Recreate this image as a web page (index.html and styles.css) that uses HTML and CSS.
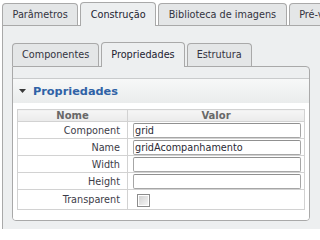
FILE: index.html
```html
<!DOCTYPE html>
<html lang="pt">
<head>
<meta charset="utf-8">
<title>Propriedades</title>
<link rel="stylesheet" href="styles.css">
</head>
<body>
<div class="outer">
  <div class="tabbar">
    <div class="tab otab">Parâmetros</div>
    <div class="tab otab active">Construção</div>
    <div class="tab otab">Biblioteca de imagens</div>
    <div class="tab otab">Pré-visualização</div>
  </div>
  <div class="panel">
    <div class="tabbar inner-tabbar">
      <div class="tab itab">Componentes</div>
      <div class="tab itab active">Propriedades</div>
      <div class="tab itab">Estrutura</div>
    </div>
    <div class="inner-panel">
      <div class="props-head">
        <svg class="caret" width="7" height="4" viewBox="0 0 7 4"><polygon points="0,0 7,0 3.5,4" fill="#3a3a3a"/></svg>
        <span class="props-title">Propriedades</span>
      </div>
      <div class="props-body">
        <table class="grid">
          <thead>
            <tr><th class="c-name">Nome</th><th>Valor</th></tr>
          </thead>
          <tbody>
            <tr><td class="lbl">Component</td><td><input class="fld" type="text" value="grid"></td></tr>
            <tr><td class="lbl">Name</td><td><input class="fld" type="text" value="gridAcompanhamento"></td></tr>
            <tr><td class="lbl">Width</td><td><input class="fld" type="text" value=""></td></tr>
            <tr><td class="lbl">Height</td><td><input class="fld" type="text" value=""></td></tr>
            <tr class="row-check"><td class="lbl">Transparent</td><td><input class="chk" type="checkbox"></td></tr>
          </tbody>
        </table>
      </div>
    </div>
  </div>
</div>
</body>
</html>
```
FILE: styles.css
```css
html, body {
  margin: 0;
  padding: 0;
  overflow: hidden;
  background: #ffffff;
}
body {
  font-family: "DejaVu Sans", Verdana, sans-serif;
  font-size: 9.7px;
  color: #333340;
}
.outer {
  width: 340px;
  padding: 2px 0 0 2px;
}
.tabbar {
  display: flex;
  align-items: flex-end;
  gap: 2px;
  height: 23px;
}
.tab {
  height: 21px;
  line-height: 21px;
  padding: 0 9px;
  border: 1px solid #a9a9a9;
  border-bottom: none;
  border-radius: 4px 4px 0 0;
  background: #e4e6e7;
  white-space: nowrap;
  flex: none;
}
.otab {
  padding-left: 9.5px;
  padding-right: 9.5px;
}
.tab.active {
  line-height: 21px;
  padding-top: 1px;
  padding-bottom: 1px;
  box-sizing: content-box;
  height: 21px;
  margin-bottom: -1px;
  background: #edeff0;
  position: relative;
  z-index: 1;
  color: #222230;
}
.panel {
  border-top: 1px solid #a9a9a9;
  border-left: 1px solid #a9a9a9;
  background: #edeff0;
  padding: 16px 0 8px 9px;
}
.inner-tabbar {
  height: 24px;
}
.itab {
  height: 22px;
  line-height: 22px;
}
.itab.active {
  height: 22px;
  padding-top: 1px;
  padding-bottom: 1px;
}
.inner-panel {
  width: 296px;
  border: 1px solid #a9a9a9;
  border-radius: 0 4px 4px 4px;
  background: #edeff0;
  padding-top: 11px;
  overflow: hidden;
}
.props-head {
  display: flex;
  align-items: center;
  height: 24px;
  border-top: 1px solid #c9cbcc;
  background: linear-gradient(#f7f8f8, #eaecec);
  padding-left: 6px;
}
.caret {
  flex: none;
  margin-right: 7px;
}
.props-title {
  font-weight: bold;
  font-size: 11.3px;
  color: #2f62a6;
}
.props-body {
  background: #ffffff;
  padding: 6px 4px 10px 4px;
}
.grid {
  width: 100%;
  border-collapse: collapse;
  border: 1px solid #d2d2d2;
  table-layout: fixed;
}
.grid th,
.grid td {
  border: 1px solid #d2d2d2;
  padding: 0;
}
.grid th {
  height: 11px;
  line-height: 11px;
  font-size: 10px;
  font-weight: bold;
  color: #686868;
  text-align: center;
  background: linear-gradient(#f6f6f6, #ebebeb);
}
.c-name {
  width: 109px;
}
.grid td {
  height: 16px;
  vertical-align: middle;
}
.lbl {
  text-align: right;
  padding-right: 7px !important;
  color: #3c3c48;
  white-space: nowrap;
}
.fld {
  display: block;
  box-sizing: border-box;
  width: calc(100% - 8px);
  height: 15px;
  margin: 0 0 0 5px;
  padding: 0 1px;
  border: 1px solid #a6a6a6;
  border-top-color: #909090;
  border-radius: 2px;
  background: #ffffff;
  font-family: "DejaVu Sans", Verdana, sans-serif;
  font-size: 9.7px;
  color: #2a2a36;
  outline: none;
}
.row-check td {
  height: 19px;
}
.chk {
  -webkit-appearance: none;
  appearance: none;
  display: block;
  box-sizing: border-box;
  width: 13px;
  height: 13px;
  margin: 1px 0 0 9px;
  border: 1px solid #8c8c8c;
  background: linear-gradient(135deg, #cfcfcf, #f8f8f8);
  box-shadow: inset 0 0 0 1px #ffffff;
}
```
